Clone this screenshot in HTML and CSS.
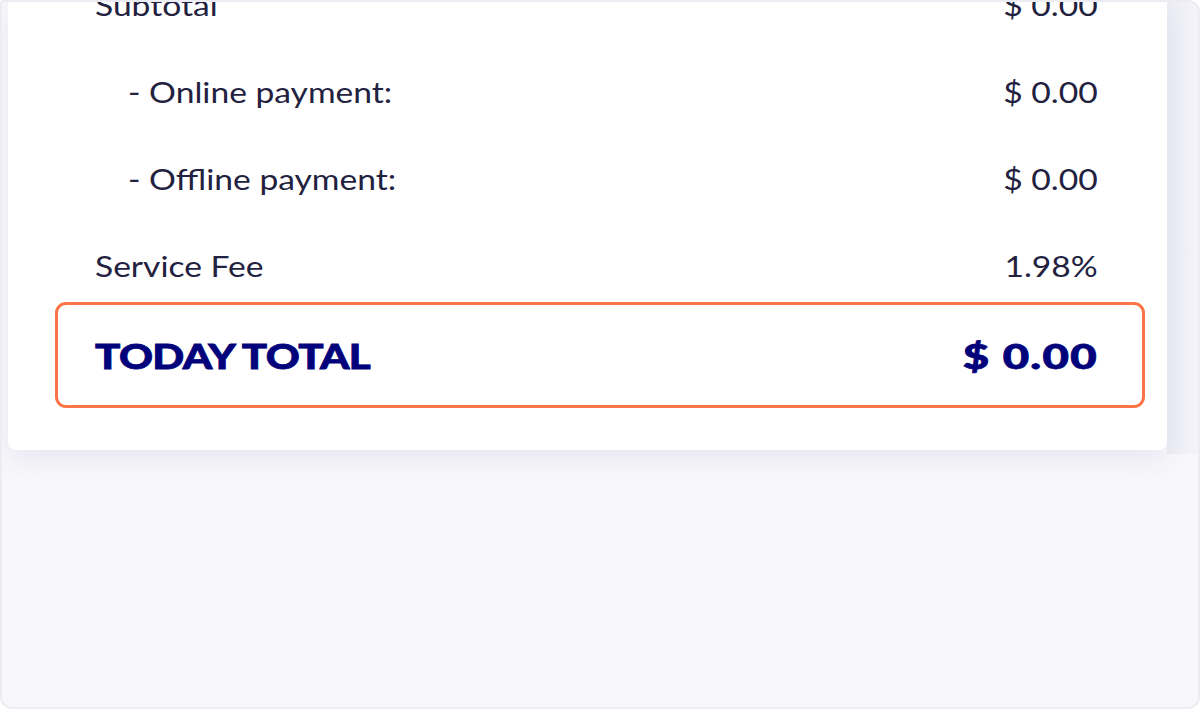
FILE: index.html
```html
<!DOCTYPE html>
<html lang="en">
<head>
<meta charset="utf-8">
<title>Order summary</title>
<link rel="stylesheet" href="styles.css">
</head>
<body>
<div class="frame">
  <div class="card">
    <div class="rows">
      <div class="row"><span class="label">Subtotal</span><span class="value">$ 0.00</span></div>
      <div class="row sub"><span class="label">- Online payment:</span><span class="value">$ 0.00</span></div>
      <div class="row sub"><span class="label">- Offline payment:</span><span class="value">$ 0.00</span></div>
      <div class="row"><span class="label">Service Fee</span><span class="value">1.98%</span></div>
    </div>
    <div class="total">
      <span class="label">TODAY TOTAL</span>
      <span class="value">$ 0.00</span>
    </div>
  </div>
  <div class="track"></div>
</div>
</body>
</html>
```
FILE: styles.css
```css
html, body {
  margin: 0;
  padding: 0;
  background: #ffffff;
}
.frame {
  box-sizing: border-box;
  width: 1200px;
  height: 709px;
  border: 2px solid #ececf2;
  border-radius: 4px 12px 12px 12px;
  background: #f8f8fb;
  display: grid;
  grid-template-columns: 1159px 1fr;
  align-items: start;
  padding-left: 6px;
  overflow: hidden;
  font-family: "Lato", "Liberation Sans", sans-serif;
}
.card {
  background: #ffffff;
  border-radius: 0 0 8px 8px;
  height: 448px;
  box-sizing: border-box;
  overflow: hidden;
  box-shadow: 0 10px 28px rgba(60, 60, 140, 0.09);
  position: relative;
  z-index: 1;
}
.track {
  height: 452px;
  background: linear-gradient(90deg, #eeeef6, #f3f3f9);
}
.rows {
  margin-top: -41px;
  padding: 0 69px 0 87px;
}
.row {
  height: 87px;
  display: flex;
  align-items: center;
  justify-content: space-between;
  font-size: 28px;
  color: #222240;
}
.label, .value {
  display: inline-block;
  transform: scaleX(1.2);
}
.label {
  transform-origin: left center;
}
.value {
  transform-origin: right center;
}
.row.sub .label {
  margin-left: 33px;
}
.total {
  margin: -7px 22px 0 47px;
  height: 106px;
  box-sizing: border-box;
  border: 3px solid #fb7447;
  border-radius: 11px;
  display: flex;
  align-items: center;
  justify-content: space-between;
  padding: 0 44px 0 37px;
  font-weight: 900;
  font-size: 35px;
  color: #02027a;
  letter-spacing: -0.5px;
  -webkit-text-stroke: 0.8px #02027a;
}
.total .value {
  transform: scaleX(1.3);
  letter-spacing: 1px;
}
```
